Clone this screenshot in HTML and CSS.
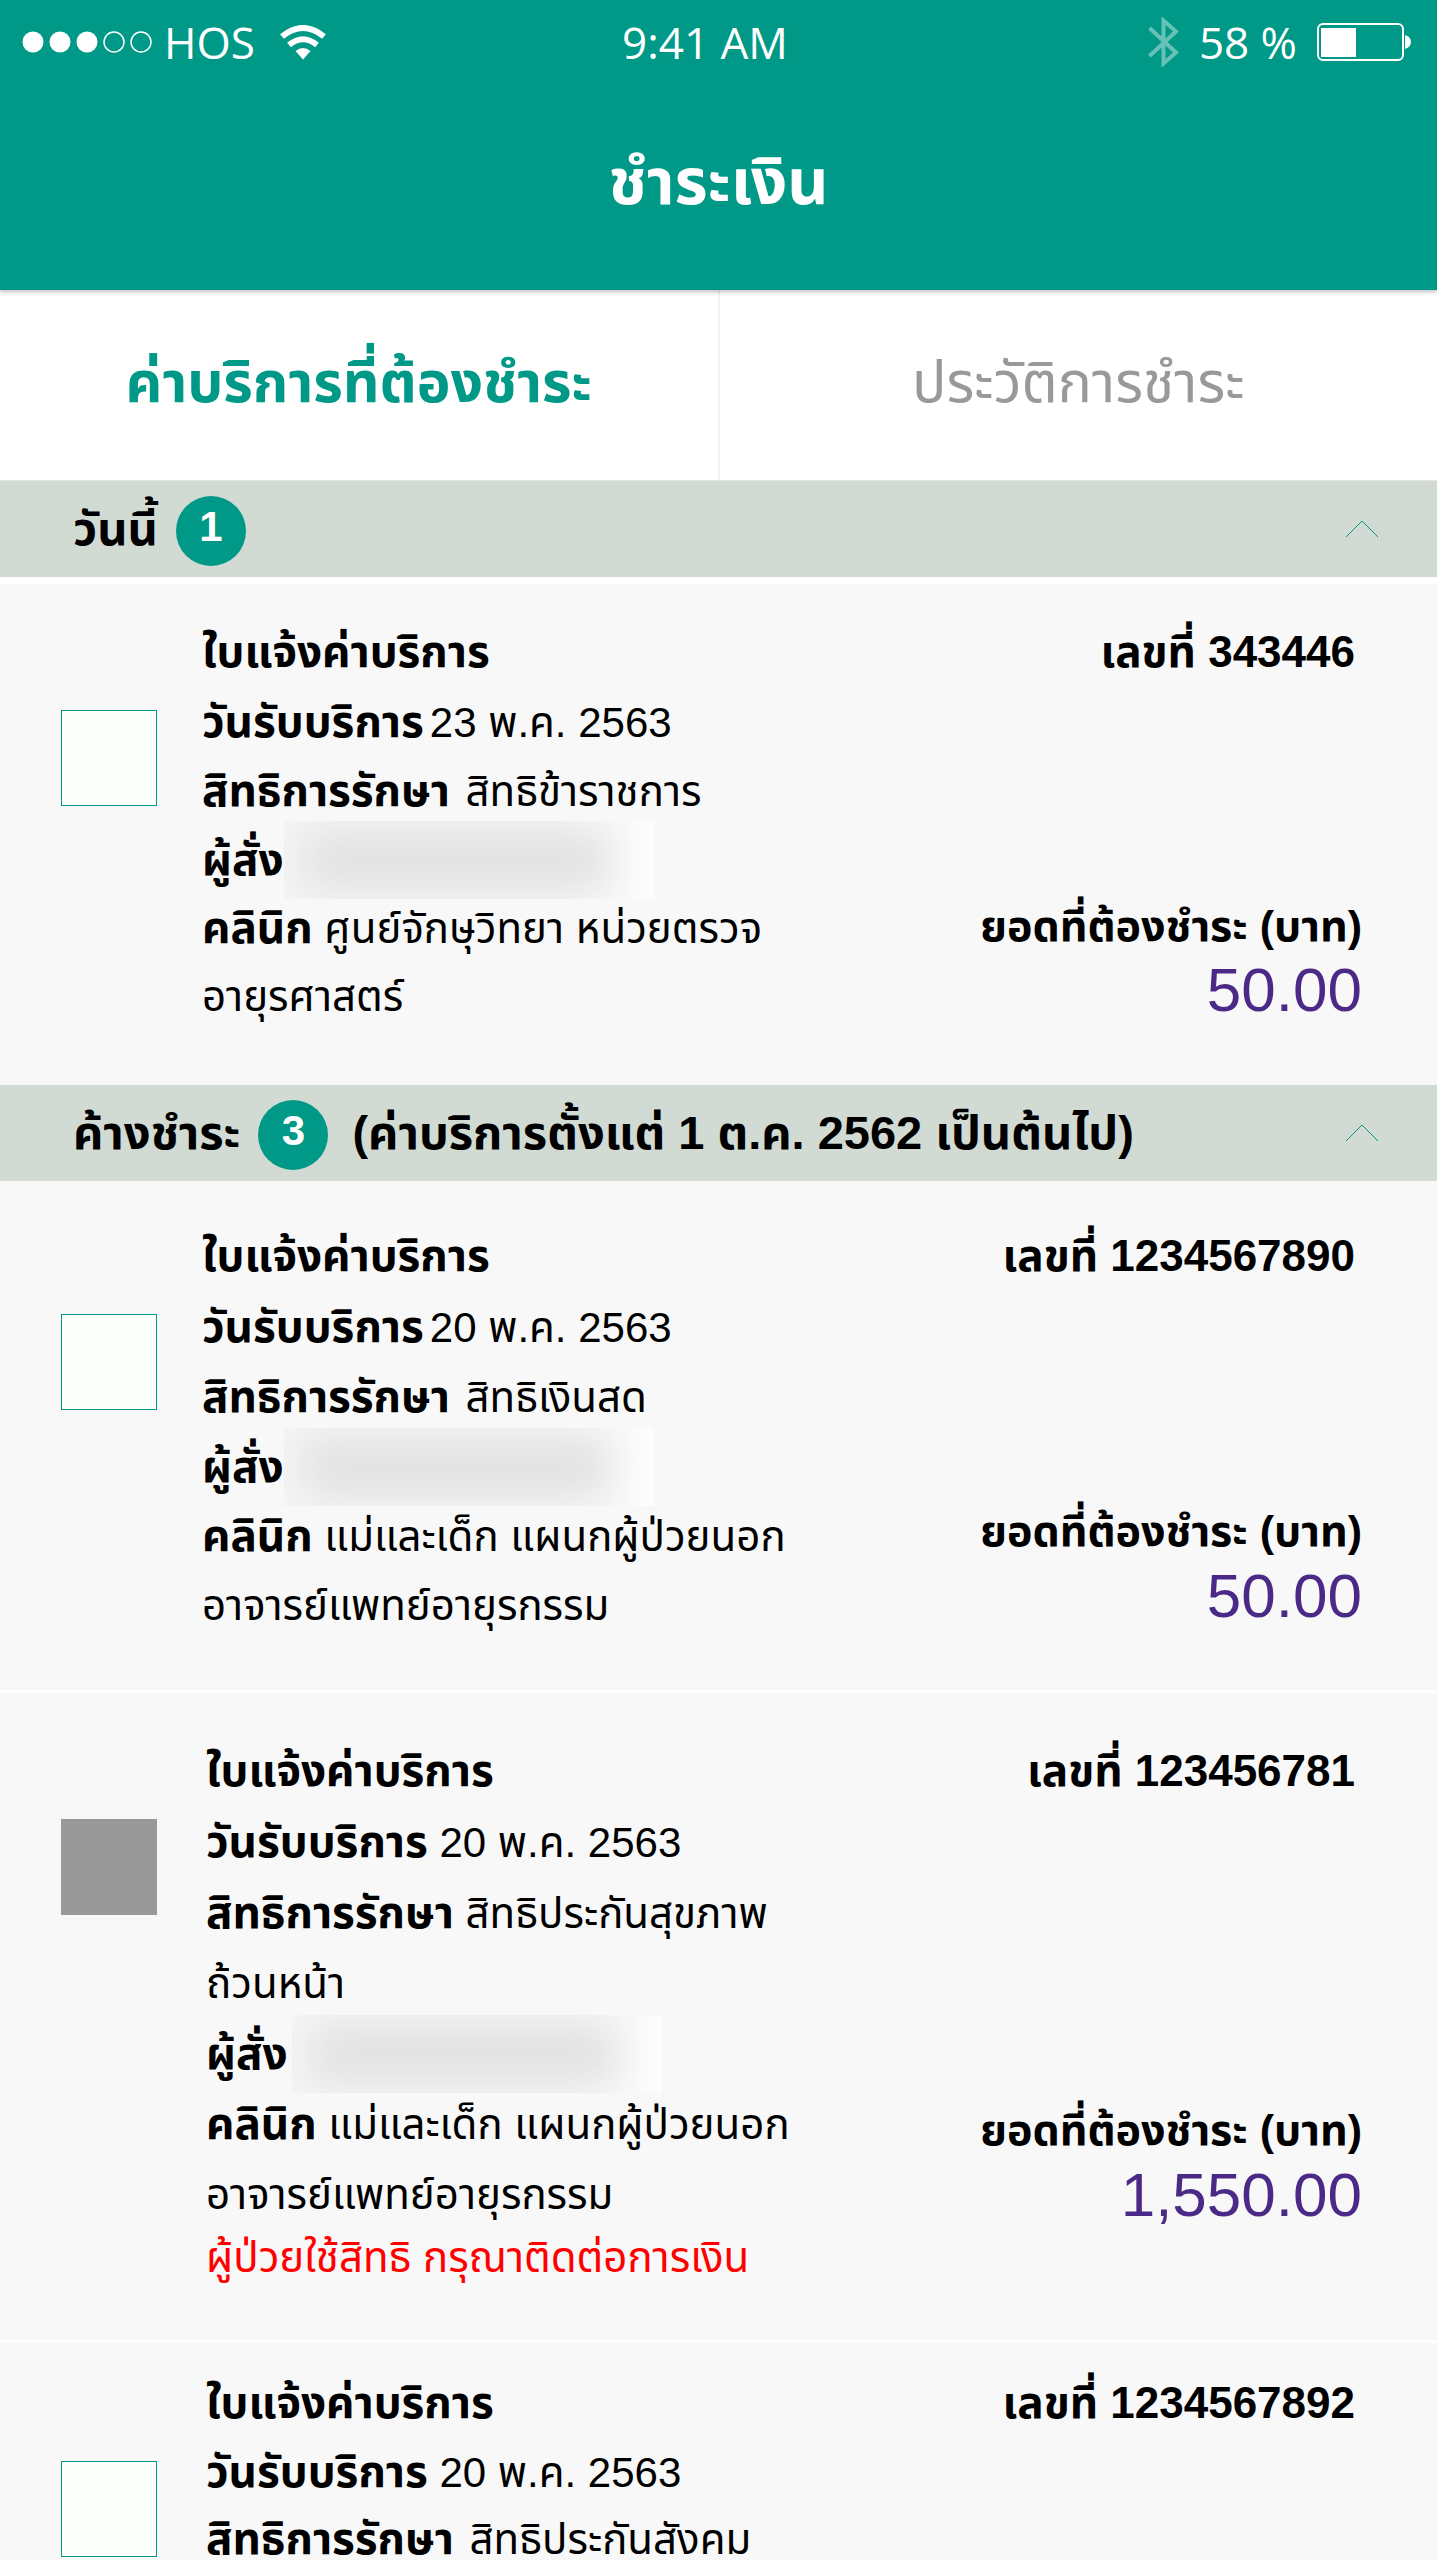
FILE: index.html
```html
<!DOCTYPE html>
<html lang="th">
<head>
    <meta charset="UTF-8">
    <meta name="viewport" content="width=device-width, initial-scale=1.0">
    <title>ชำระเงิน</title>
    <link rel="stylesheet" href="styles.css">
</head>
<body>
    <div class="app">
        <header class="header">
            <div class="status-bar">
                <div class="status-left">
                    <svg class="signal" width="130" height="22" viewBox="0 0 130 22">
                        <circle cx="11" cy="11" r="10.5" fill="#fff"/>
                        <circle cx="38" cy="11" r="10.5" fill="#fff"/>
                        <circle cx="65" cy="11" r="10.5" fill="#fff"/>
                        <circle cx="92" cy="11" r="10" fill="none" stroke="#fff" stroke-width="1.5"/>
                        <circle cx="119" cy="11" r="10" fill="none" stroke="#fff" stroke-width="1.5"/>
                    </svg>
                    <span class="carrier">HOS</span>
                    <svg class="wifi" width="46" height="35" viewBox="0 0 46 35">
                        <path d="M2 11.5Q23-5.5 44 11.5" fill="none" stroke="#fff" stroke-width="6"/>
                        <path d="M9 20Q23 8.5 37 20" fill="none" stroke="#fff" stroke-width="6"/>
                        <path d="M15.5 26Q23 20 30.5 26L23 34.5Z" fill="#fff"/>
                    </svg>
                </div>
                <span class="time">9:41 AM</span>
                <div class="status-right">
                    <svg class="bluetooth" width="31" height="50" viewBox="0 0 31 50">
                        <path d="M1.5 11L28 35.5L15.5 46.5V3.5L28 14.5L1.5 39" fill="none" stroke="#fff" stroke-width="4"/>
                    </svg>
                    <span>58 %</span>
                    <svg class="battery" width="95" height="38" viewBox="0 0 95 38">
                        <rect x="1" y="1" width="85" height="36" rx="5" fill="none" stroke="#fff" stroke-width="2"/>
                        <rect x="4" y="5" width="35" height="29" fill="#fff"/>
                        <path d="M88 12Q94 14 94 19Q94 24 88 26Z" fill="#fff"/>
                    </svg>
                </div>
            </div>
            <h1 class="title">ชำระเงิน</h1>
        </header>

        <nav class="tabs">
            <button type="button" class="tab active">ค่าบริการที่ต้องชำระ</button>
            <button type="button" class="tab">ประวัติการชำระ</button>
        </nav>

        <main class="list">
            <section class="group today">
                <div class="group-header">
                    <h2>วันนี้</h2>
                    <span class="badge">1</span>
                    <button type="button" class="toggle" aria-label="ย่อรายการ">
                        <svg width="34" height="18" viewBox="0 0 34 18"><path d="M1 17L17 1L33 17" fill="none" stroke="#009987"/></svg>
                    </button>
                </div>
                <article class="bill">
                    <h3>ใบแจ้งค่าบริการ</h3>
                    <div class="number">เลขที่ 343446</div>
                    <input type="checkbox" class="check" aria-label="เลือกใบแจ้งค่าบริการ 343446">
                    <div class="details">
                        <p class="tight"><b>วันรับบริการ</b>23 พ.ค. 2563</p>
                        <p class="wide"><b>สิทธิการรักษา</b> สิทธิข้าราชการ</p>
                        <p class="doctor"><b>ผู้สั่ง</b> <span class="hidden-name"></span></p>
                        <p><b>คลินิก</b> ศูนย์จักษุวิทยา หน่วยตรวจ<br>อายุรศาสตร์</p>
                    </div>
                    <div class="total">
                        <div>ยอดที่ต้องชำระ (บาท)</div>
                        <div class="amount">50.00</div>
                    </div>
                </article>
            </section>

            <section class="group">
                <div class="group-header">
                    <h2>ค้างชำระ</h2>
                    <span class="badge">3</span>
                    <h2>(ค่าบริการตั้งแต่ 1 ต.ค. 2562 เป็นต้นไป)</h2>
                    <button type="button" class="toggle" aria-label="ย่อรายการ">
                        <svg width="34" height="18" viewBox="0 0 34 18"><path d="M1 17L17 1L33 17" fill="none" stroke="#009987"/></svg>
                    </button>
                </div>
                <article class="bill">
                    <h3>ใบแจ้งค่าบริการ</h3>
                    <div class="number">เลขที่ 1234567890</div>
                    <input type="checkbox" class="check" aria-label="เลือกใบแจ้งค่าบริการ 1234567890">
                    <div class="details">
                        <p class="tight"><b>วันรับบริการ</b>20 พ.ค. 2563</p>
                        <p class="wide"><b>สิทธิการรักษา</b> สิทธิเงินสด</p>
                        <p class="doctor"><b>ผู้สั่ง</b> <span class="hidden-name"></span></p>
                        <p><b>คลินิก</b> แม่และเด็ก แผนกผู้ป่วยนอก<br>อาจารย์แพทย์อายุรกรรม</p>
                    </div>
                    <div class="total">
                        <div>ยอดที่ต้องชำระ (บาท)</div>
                        <div class="amount">50.00</div>
                    </div>
                </article>
                <article class="bill locked">
                    <h3>ใบแจ้งค่าบริการ</h3>
                    <div class="number">เลขที่ 123456781</div>
                    <input type="checkbox" class="check" disabled aria-label="เลือกใบแจ้งค่าบริการ 123456781">
                    <div class="details">
                        <p><b>วันรับบริการ</b> 20 พ.ค. 2563</p>
                        <p><b>สิทธิการรักษา</b> สิทธิประกันสุขภาพ<br>ถ้วนหน้า</p>
                        <p class="doctor"><b>ผู้สั่ง</b> <span class="hidden-name"></span></p>
                        <p><b>คลินิก</b> แม่และเด็ก แผนกผู้ป่วยนอก<br>อาจารย์แพทย์อายุรกรรม</p>
                    </div>
                    <div class="total">
                        <div>ยอดที่ต้องชำระ (บาท)</div>
                        <div class="amount">1,550.00</div>
                    </div>
                    <p class="notice">ผู้ป่วยใช้สิทธิ กรุณาติดต่อการเงิน</p>
                </article>
                <article class="bill last">
                    <h3>ใบแจ้งค่าบริการ</h3>
                    <div class="number">เลขที่ 1234567892</div>
                    <input type="checkbox" class="check" aria-label="เลือกใบแจ้งค่าบริการ 1234567892">
                    <div class="details">
                        <p><b>วันรับบริการ</b> 20 พ.ค. 2563</p>
                        <p class="wide"><b>สิทธิการรักษา</b> สิทธิประกันสังคม</p>
                    </div>
                </article>
            </section>
        </main>
    </div>
</body>
</html>
```
FILE: styles.css
```css
* {
    box-sizing: border-box;
}

body {
    margin: 0;
    font-family: "Liberation Sans", "Noto Sans Thai", sans-serif;
    font-size: 44px;
    color: #000;
    background-color: #fff;
}

h1, h2, h3, p {
    margin: 0;
}

button {
    font-family: inherit;
    border: none;
    background: none;
    padding: 0;
    cursor: pointer;
}

svg {
    display: block;
}

.app {
    height: 100vh;
    display: flex;
    flex-direction: column;
    overflow: hidden;
    border-right: 3px solid #fff;
}

/* header */
.header {
    flex: none;
    height: 290px;
    background-color: #009987;
    color: #fff;
    box-shadow: 0 2px 4px rgba(0, 0, 0, 0.25);
    z-index: 1;
}

.status-bar {
    display: grid;
    grid-template-columns: 1fr auto 1fr;
    align-items: center;
    height: 84px;
    padding: 0 25px 0 22px;
    font-family: "Open Sans", "Noto Sans", sans-serif;
    line-height: 60px;
}

.status-left,
.status-right {
    display: flex;
    align-items: center;
}

.carrier {
    padding: 0 25px 0 12px;
}

.time {
    padding-right: 24px;
}

.status-right {
    justify-content: flex-end;
    gap: 20px;
}

.bluetooth {
    opacity: 0.4;
}

.title {
    font-size: 64px;
    line-height: 88px;
    padding-top: 54px;
    text-align: center;
}

/* tabs */
.tabs {
    flex: none;
    display: flex;
    height: 191px;
    border-bottom: 1px solid #e5e5e5;
}

.tab {
    flex: 1;
    font-size: 57px;
    color: #999;
    border-right: 2px solid #f3f3f3;
}

.tab:last-child {
    border-right: none;
}

.tab.active {
    font-weight: bold;
    color: #009987;
}

/* bill list */
.list {
    flex: 1;
    min-height: 0;
    overflow: hidden;
}

.group-header {
    display: flex;
    align-items: center;
    height: 96px;
    padding: 0 58px 0 73px;
    background-color: #d1dad3;
}

.today .group-header {
    margin-bottom: 7px;
}

.group-header h2 {
    font-size: 47px;
    line-height: 70px;
}

.badge {
    width: 70px;
    height: 70px;
    margin: 4px 24px 0 18px;
    border-radius: 50%;
    background-color: #009987;
    color: #fff;
    font-size: 42px;
    font-weight: bold;
    line-height: 62px;
    text-align: center;
}

.toggle {
    margin-left: auto;
}

.bill {
    display: grid;
    grid-template-columns: 141px auto 1fr;
    padding: 39px 75px 50px 61px;
    line-height: 69px;
    background-color: #f8f8f8;
    border-bottom: 3px solid #fff;
}

.today .bill {
    padding-top: 32px;
    padding-bottom: 54px;
    line-height: 68px;
    border-bottom: none;
}

.bill.locked {
    padding-top: 42px;
    padding-bottom: 54px;
    grid-template-columns: 145px auto 1fr;
    line-height: 70px;
}

.bill.last {
    padding-top: 24px;
    grid-template-columns: 145px auto 1fr;
    line-height: 66px;
}

.bill h3 {
    grid-column: 2;
    font-size: 44px;
    line-height: 72px;
}

.number {
    padding-right: 7px;
    font-weight: bold;
    line-height: 72px;
    text-align: right;
}

.check {
    appearance: none;
    width: 96px;
    height: 96px;
    margin: 22px 0 0;
    background-color: #fdfffd;
    border: 1px solid #009987;
}

.check:disabled {
    margin-top: 12px;
    background-color: #999;
    border-color: #999;
}

.details {
    font-size: 42px;
}

.details b {
    font-size: 44px;
}

.tight b {
    margin-right: 6px;
}

.wide b {
    margin-right: 4px;
}

.doctor {
    display: flex;
    align-items: center;
}

/* doctor's name is blurred out */
.hidden-name {
    width: 370px;
    height: 78px;
    margin: -8px 0;
    padding: 8px 44px 8px 16px;
    overflow: hidden;
    background: linear-gradient(90deg, #f6f6f6 75%, #fdfdfd);
}

.locked .hidden-name {
    margin-left: 4px;
}

.hidden-name::before {
    content: "";
    display: block;
    height: 100%;
    background-color: #e2e2e2;
    filter: blur(20px);
}

.total {
    align-self: end;
    padding-bottom: 14px;
    font-size: 43px;
    font-weight: bold;
    text-align: right;
}

.today .total {
    padding-bottom: 11px;
}

.locked .total {
    padding-bottom: 5px;
}

.amount {
    font-size: 62px;
    font-weight: normal;
    line-height: 60px;
    color: #4b2a87;
}

.notice {
    grid-column: 2 / 4;
    font-size: 42px;
    line-height: 56px;
    color: #f00;
}
```
